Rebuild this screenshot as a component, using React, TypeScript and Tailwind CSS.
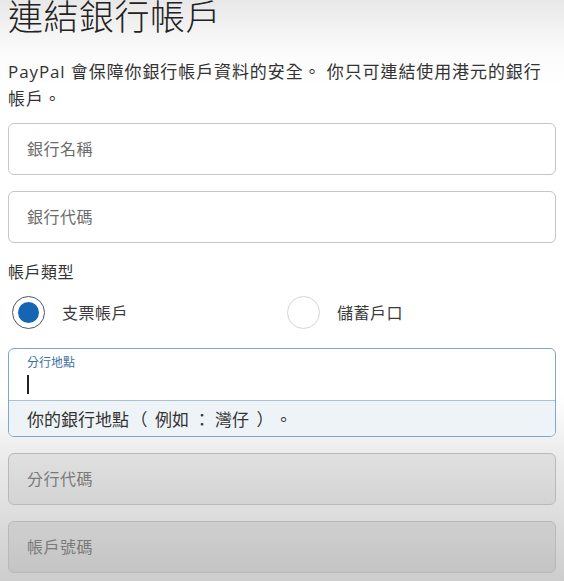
import React from 'react';

const font = { fontFamily: '"Open Sans", "Noto Sans CJK TC", sans-serif' };
const cjk = { fontFamily: '"Noto Sans CJK TC", sans-serif' };

function Field({ label, disabled }: { label: string; disabled?: boolean }) {
  return (
    <div
      className={`flex h-[52px] items-center rounded-[6px] border px-[18px] ${
        disabled ? 'border-[#b9b9b9] bg-black/[0.05]' : 'border-[#c6c6c6] bg-white'
      }`}
    >
      <span className={`text-[16px] tracking-[0.5px] ${disabled ? 'text-[#7a7a7a]' : 'text-[#6c6c6c]'}`}>
        {label}
      </span>
    </div>
  );
}

function Radio({ checked, label }: { checked?: boolean; label: string }) {
  return (
    <label className="flex items-center gap-[17px]">
      <span
        className={`flex h-[33px] w-[33px] items-center justify-center rounded-full border-[1.5px] bg-white ${
          checked ? 'border-[#4d5563]' : 'border-[#d5d5d5]'
        }`}
      >
        {checked && <span className="h-[21px] w-[21px] rounded-full bg-[#1565b4]" />}
      </span>
      <span className="text-[16px] tracking-[0.5px] text-[#3a3a3a]">{label}</span>
    </label>
  );
}

// full-width punctuation in the hint is drawn wide, with space on both sides
function Punct({ ch, shift = '' }: { ch: string; shift?: string }) {
  return <span className={`inline-block w-[26px] text-center ${shift}`}>{ch}</span>;
}

export default function App() {
  return (
    <div
      style={font}
      className="h-[581px] w-[564px] overflow-hidden bg-[linear-gradient(to_bottom,#e8e8e8_0%,#fbfbfb_9%,#ffffff_15%,#ffffff_68%,#ececec_78%,#cdcdcd_100%)] px-[8px] text-[#2b2b2b] [text-spacing-trim:space-all]"
    >
      <h1 className="-mt-[6px] text-[35px] leading-[46px] font-light tracking-[0.5px] text-[#222]">
        連結銀行帳戶
      </h1>

      <p className="mt-[18px] max-w-[540px] text-[17px] leading-[27px] tracking-[0.9px] text-[#333]">
        PayPal 會保障你銀行帳戶資料的安全。 你只可連結使用港元的銀行帳戶。
      </p>

      <div className="mt-[11px] flex flex-col gap-[16px]">
        <Field label="銀行名稱" />
        <Field label="銀行代碼" />
      </div>

      <div className="mt-[17px] text-[16px] tracking-[0.5px] text-[#333]">帳戶類型</div>

      <div className="mt-[12px] grid grid-cols-2 pl-[4px]">
        <Radio checked label="支票帳戶" />
        <div className="pl-[3px]">
          <Radio label="儲蓄戶口" />
        </div>
      </div>

      <div className="mt-[19px] overflow-hidden rounded-[6px] border border-[#7ea7c9] bg-white">
        <div className="flex h-[51px] flex-col px-[18px] pt-[6px]">
          <span className="text-[12px] leading-[16px] text-[#3b6fa3]">分行地點</span>
          <span className="mt-[4px] h-[19px] w-[1.5px] bg-[#222]" />
        </div>
        <div
          style={cjk}
          className="flex h-[36px] items-center border-t border-[#a9c1d6] bg-[#eef3f7] px-[18px] text-[17px] text-[#333]"
        >
          <span>
            你的銀行地點
            <Punct ch="（" shift="-translate-x-[3px]" />
            例如
            <Punct ch="：" />
            灣仔
            <Punct ch="）" shift="translate-x-[3px]" />
            。
          </span>
        </div>
      </div>

      <div className="mt-[16px] flex flex-col gap-[16px]">
        <Field label="分行代碼" disabled />
        <Field label="帳戶號碼" disabled />
      </div>
    </div>
  );
}
